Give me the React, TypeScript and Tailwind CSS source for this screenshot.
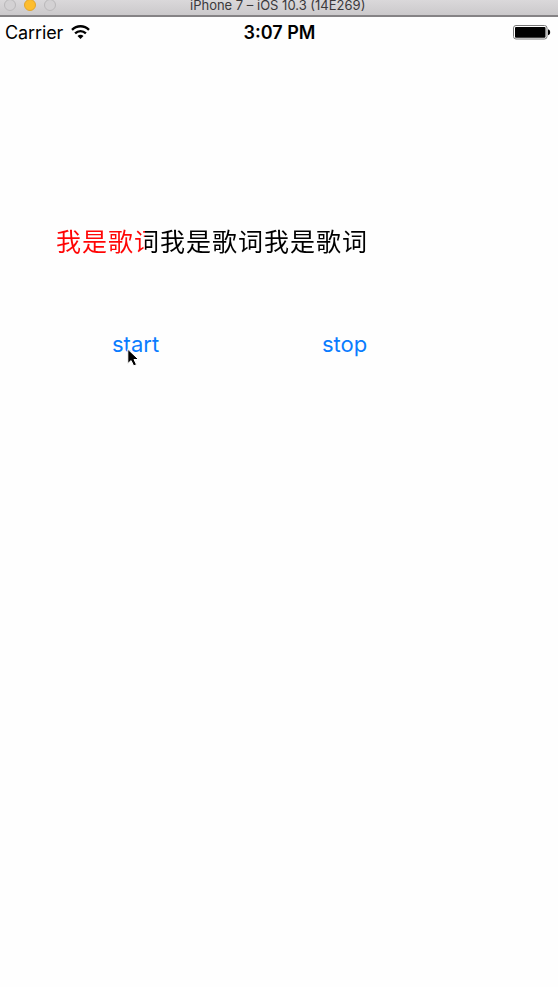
const LYRIC = "我是歌词我是歌词我是歌词";

function TitleBar() {
  return (
    <header className="relative h-[17px] shrink-0 border-b-2 border-[#858385] bg-gradient-to-b from-[#dad8da] to-[#cbc9cb]">
      <div className="absolute top-[-1px] left-[4px] flex gap-[8px]">
        <span className="size-[12px] rounded-full border border-[#bab8ba] bg-[#d3d1d3]" />
        <span className="size-[12px] rounded-full border border-[#e2a52c] bg-[#fdbd2e]" />
        <span className="size-[12px] rounded-full border border-[#bab8ba] bg-[#d3d1d3]" />
      </div>
      <h1 className="pl-[190px] text-[13px] leading-[10px] whitespace-nowrap text-[#3b393b]">
        iPhone 7 – iOS 10.3 (14E269)
      </h1>
    </header>
  );
}

function StatusBar() {
  return (
    <div className="grid h-[30px] shrink-0 grid-cols-3 items-center pr-[7px] pl-[5px] text-[18px] text-black">
      <div className="flex items-center gap-[8px]">
        <span className="tracking-[-0.1px]">Carrier</span>
        <svg width="19" height="15" viewBox="0 0 19 15" fill="none" stroke="#000" strokeWidth="2.3">
          <path d="M1 4.9C5.8 0 13.2 0 18 4.9" />
          <path d="M4.1 8.4c3.1-3.1 7.7-3.1 10.8 0" />
          <path d="M6.5 11c1.7-1.6 4.3-1.6 6 0l-3 3z" fill="#000" stroke="none" />
        </svg>
      </div>
      <span className="pl-[3px] text-center font-semibold">3:07 PM</span>
      <svg className="justify-self-end" width="38" height="15" viewBox="0 0 38 15">
        <rect x="0.5" y="0.5" width="33.5" height="13.5" rx="2.5" fill="#fff" stroke="#777" />
        <rect x="2" y="2" width="30.5" height="10.8" rx="1" fill="#000" />
        <path d="M35 4.3c2.9.5 2.9 5.5 0 6z" fill="#000" />
      </svg>
    </div>
  );
}

export default function App() {
  return (
    <main className="flex h-[987px] w-[558px] flex-col overflow-hidden bg-[#fefefe] font-['Inter','Noto_Sans_CJK_SC',sans-serif]">
      <TitleBar />
      <StatusBar />
      <div className="mt-[175px] ml-[56px] h-[36px]">
        <p className="w-fit bg-[linear-gradient(to_right,#ff0505_89px,#000_89px)] bg-clip-text font-['Noto_Sans_CJK_SC',sans-serif] text-[25px] leading-[36px] tracking-[1px] whitespace-nowrap text-transparent">
          {LYRIC}
        </p>
      </div>
      <div className="mt-[71px] flex pl-[112px] text-[22px] leading-[30px] text-[#0a7cff]">
        <div className="relative w-[210px]">
          <button>start</button>
          <svg className="absolute top-[19px] left-[14px]" width="14" height="20" viewBox="0 0 14 20">
            <path d="M1.8 1.2v14.4l3.3-3 2.6 5.3 2.8-1.3-2.5-5.1h4.6z" fill="#000" stroke="#fff" strokeWidth="1" />
          </svg>
        </div>
        <button>stop</button>
      </div>
    </main>
  );
}
